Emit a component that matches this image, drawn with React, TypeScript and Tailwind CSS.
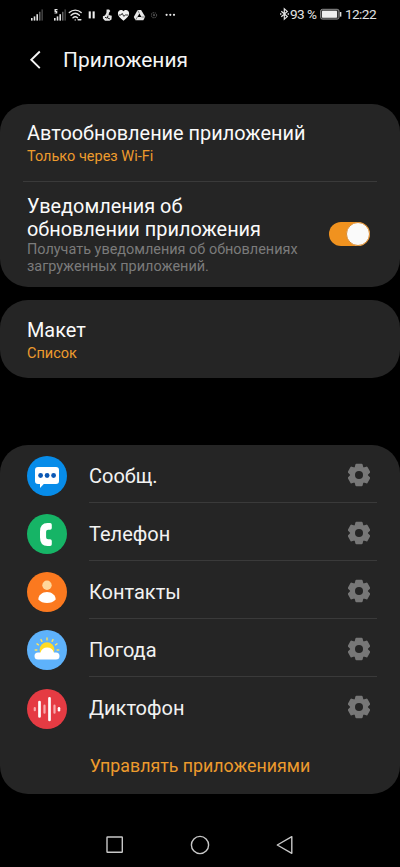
import type { ReactNode } from "react";

function Signal({ busy = false }: { busy?: boolean }) {
  return (
    <svg width="14" height="14" viewBox="0 0 14 14" fill="#e4e4e4">
      <rect x="1" y="10" width="1.6" height="2.6" />
      <rect x="3.7" y="8.4" width="1.6" height="4.2" />
      <rect x="6.4" y="6.2" width="1.6" height="6.4" />
      <rect x="9" y="3.8" width="1.5" height="8.8" fill="#6a6a6a" />
      <rect x="11.5" y="1.4" width="1.3" height="11.2" fill="#4c4c4c" />
      {busy && <path d="M1.500 1h3v1.200H2.900v.8h1.400v2.600H1.500V4.500h1.400V4H1.500z" />}
    </svg>
  );
}

function Gear() {
  return (
    <svg className="mt-[17.500px] mr-[7px]" width="22" height="24" viewBox="-11 -12 22 24">
      <g fill="#777777">
        {[0, 60, 120, 180, 240, 300].map((angle) => (
          <path key={angle} transform={`rotate(${angle})`} d="M-4.600-6.500l1-4q.2-.8 1-.8h5.200q.8 0 1 .8l1 4z" />
        ))}
        <circle r="8.700" />
      </g>
      <circle r="4" fill="#252525" />
    </svg>
  );
}

function StatusIcons() {
  return (
    <div className="flex items-center">
      <Signal />
      <div className="ml-[9px] flex"><Signal busy /></div>
      <svg className="ml-[1px]" width="15" height="14" viewBox="0 0 15 14" fill="none" stroke="#e4e4e4" strokeWidth="1.4" strokeLinecap="round">
        <path d="M1.300 4.600C4.800 1.300 9.700 1.300 13.200 4.600" />
        <path d="M3.100 7.200c2.500-2.300 5.800-2.300 8.300 0" />
        <path d="M5 9.700c1.400-1.200 3.100-1.200 4.500 0" />
        <path d="M7.200 11.900h.1" />
        <path d="M10.200 11.700h2.600" strokeWidth="1.500" />
      </svg>
      <svg className="ml-[5px]" width="8" height="14" viewBox="0 0 8 14" fill="#eee">
        <rect x="0.700" y="3.400" width="2.100" height="7" />
        <rect x="4.600" y="3.400" width="2.100" height="7" />
      </svg>
      <svg className="ml-[6px]" width="11" height="14" viewBox="0 0 11 14">
        <path fill="#e4e4e4" d="M4.600 1.400h2.500l1.200 1.700-1.300 1.600-.4 2.200 3.200.9-.3 3.600-2 1.300H3L.9 10.400V8.300l2.100-.8 1.400-2.400z" />
        <path fill="none" stroke="#000" strokeWidth="0.900" d="M3 9.300l2 .8M6 7.600l-.6 2.300 2.500 1" />
      </svg>
      <svg className="ml-[4px]" width="13" height="14" viewBox="0 0 13 14">
        <path fill="#f0f0f0" d="M6.500 12.800C3 10 .9 8 .9 5.300.9 3.300 2.300 2 4 2c1 0 1.900.5 2.500 1.300C7.100 2.500 8 2 9 2c1.700 0 3.100 1.300 3.100 3.300 0 2.700-2.100 4.700-5.600 7.500z" />
        <path fill="none" stroke="#000" strokeWidth="0.800" d="M2 7h2l1.200-1.600 1.600 3L8.300 7H11" />
      </svg>
      <svg className="ml-[3px]" width="13" height="14" viewBox="0 0 13 14">
        <path fill="#e8e8e8" d="M4.600 2h3.500l4.100 6.800-1.900 3.500H2.500L.8 9z" />
        <path fill="#000" d="M6.400 5.500l2 3.500h-4z" />
        <path fill="none" stroke="#222" strokeWidth="0.500" d="M6.400 5.500L4.600 2.200M8.400 9h4M4.400 9l-2 3.300" />
      </svg>
      <svg className="ml-[4px]" width="8" height="14" viewBox="0 0 8 14" fill="none" stroke="#484848" strokeWidth="1.100">
        <circle cx="4" cy="7.200" r="2.600" strokeDasharray="1.400 .7" />
        <circle cx="4" cy="7.200" r=".6" />
      </svg>
      <svg className="ml-[7px]" width="11" height="14" viewBox="0 0 11 14" fill="#e8e8e8">
        <circle cx="1.600" cy="6.800" r="1.100" />
        <circle cx="5.300" cy="6.800" r="1.100" />
        <circle cx="9" cy="6.800" r="1.100" />
      </svg>
    </div>
  );
}

function StatusBar() {
  return (
    <header className="flex h-[29px] items-center justify-between pr-6 pl-[30px] text-[13.600px] text-[#e2e2e2]">
      <StatusIcons />
      <div className="flex items-center whitespace-nowrap">
        <svg width="11" height="14" viewBox="0 0 11 14" fill="none" stroke="#e4e4e4" strokeWidth="1.200">
          <path d="M2.300 4.200l6 5.400-3 2.600V1.800l3 2.600-6 5.400" />
          <path d="M1 7h1.400M8.600 7H10" strokeWidth="1.400" />
        </svg>
        <span className="w-[27px] tracking-[-0.500px]">93 %</span>
        <svg className="ml-[3px]" width="22" height="14" viewBox="0 0 22 14">
          <rect x=".6" y="2.300" width="18.400" height="9.800" rx="1.800" fill="#333" stroke="#8b8b8b" />
          <rect x="2" y="3.700" width="15" height="7" rx=".6" fill="#eee" />
          <path d="M20.600 5v4.600" stroke="#ddd" strokeWidth="1.500" />
        </svg>
        <span className="ml-[3px] tracking-[-0.550px]">12:22</span>
      </div>
    </header>
  );
}

function Setting({ title, value }: { title: string; value: string }) {
  return (
    <div className="px-[27px]">
      <h2 className="text-[19.900px] leading-[23.400px] whitespace-nowrap text-[#fafafa]">{title}</h2>
      <p className="mt-[3px] text-[14.500px] leading-[17px] whitespace-nowrap text-[#ed9b2d]">{value}</p>
    </div>
  );
}

function Toggle() {
  return (
    <div className="flex h-6 w-[41px] items-center justify-end rounded-full bg-[#f0921f]">
      <div className="size-6 rounded-full border border-[#d98d35] bg-[#fafafa]" />
    </div>
  );
}

const apps: { name: string; color: string; glyph: ReactNode }[] = [
  {
    name: "Сообщ.",
    color: "#078ce9",
    glyph: (
      <>
        <path fill="#fff" d="M11 11h18a3 3 0 0 1 3 3v11a3 3 0 0 1-3 3H16.800L13 32v-4h-2a3 3 0 0 1-3-3V14a3 3 0 0 1 3-3z" />
        <g fill="#0b58b5">
          <circle cx="13.600" cy="19.500" r="2.400" />
          <circle cx="20.100" cy="19.500" r="2.400" />
          <circle cx="26.600" cy="19.500" r="2.400" />
        </g>
      </>
    ),
  },
  {
    name: "Телефон",
    color: "#16b466",
    glyph: <path fill="#fff" d="M20.500 9h2.600q1.700 0 1.700 1.700v3.300q0 1.700-1.700 1.700h-2q-2 0-2 2v5.600q0 2 2 2h2q1.700 0 1.700 1.700v3.300q0 1.700-1.700 1.700h-2.600q-7.500 0-7.500-8.500v-6q0-8.500 7.500-8.500z" />,
  },
  {
    name: "Контакты",
    color: "#fb791f",
    glyph: (
      <>
        <circle cx="20" cy="13.200" r="4.700" fill="#ffd79a" />
        <path fill="#fff" d="M11.300 27.500c0-4.400 3.900-7.600 8.700-7.600s8.700 3.200 8.700 7.600c-2.200 2.300-5.100 3.600-8.700 3.600s-6.500-1.300-8.700-3.600z" />
      </>
    ),
  },
  {
    name: "Погода",
    color: "#5eb2fb",
    glyph: (
      <>
        <circle cx="20" cy="19.700" r="7.400" fill="#ffdb25" />
        <path fill="none" stroke="#ffe35c" strokeWidth="1.400" strokeLinecap="round" d="M20 8v1.900M14 9.600l.9 1.700M26 9.600l-.9 1.700M10 13.800l1.500 1M30 13.800l-1.500 1M8.200 20h1.700M31.800 20h-1.700" />
        <path fill="#fff" d="M11 22.500h2.500c1-3 3.400-4.900 6.700-4.900s5.700 1.900 6.700 4.900H29a3.500 3.500 0 0 1 0 7H11a3.500 3.500 0 0 1 0-7z" />
      </>
    ),
  },
  {
    name: "Диктофон",
    color: "#e53b43",
    glyph: (
      <g fill="none" strokeLinecap="round" strokeWidth="2.700">
        <path stroke="#fff" d="M12.500 13v14.500M22.500 9.300v21.700" />
        <path stroke="#f8a9ac" strokeWidth="2.200" d="M17.500 16.700v7M27.500 16.700v7M7.800 19v2.200" />
        <path stroke="#fff" strokeWidth="2.500" d="M32 19.200v2" />
      </g>
    ),
  },
];

export default function App() {
  return (
    <div className="flex h-[867px] w-[400px] flex-col overflow-hidden bg-black font-['Roboto',sans-serif]">
      <StatusBar />
      <div className="flex h-[75px] items-start pt-[19px] pl-[29px]">
        <svg className="mt-[2px]" width="14" height="20" viewBox="0 0 14 20" fill="none" stroke="#f5f5f5" strokeWidth="1.900">
          <path d="M10.800 1.500L2.300 9.800l8.500 8.300" />
        </svg>
        <h1 className="ml-5 text-[20.900px] leading-6 text-[#f5f5f5]">Приложения</h1>
      </div>

      <main className="flex flex-col">
        <section className="h-[183px] rounded-[28px] bg-[#252525] pt-[18px]">
          <Setting title="Автообновление приложений" value="Только через Wi-Fi" />
          <div className="mx-[23px] mt-[15.600px] h-px bg-[#3a3a3a]" />
          <div className="flex items-start justify-between pt-[13px] pr-[30px] pl-[27px]">
            <div className="whitespace-nowrap">
              <h2 className="text-[19.900px] leading-[23.400px] text-[#fafafa]">Уведомления об<br />обновлении приложения</h2>
              <p className="-mt-px text-[14.450px] leading-[17px] text-[#7b7b7b]">Получать уведомления об обновлениях<br />загруженных приложений.</p>
            </div>
            <div className="mt-[27px]"><Toggle /></div>
          </div>
        </section>

        <section className="mt-[13px] h-[77.500px] rounded-[28px] bg-[#252525] pt-[18.500px]">
          <Setting title="Макет" value="Список" />
        </section>

        <section className="mt-[67.500px] h-[349px] rounded-[28px] bg-[#252525]">
          <ul>
            {apps.map((app, i) => (
              <li key={app.name} className="flex h-[58.100px] pl-[27px]">
                <svg className="mt-[11.200px] shrink-0" width="40" height="40" viewBox="0 0 40 40">
                  <circle cx="20" cy="20" r="20" fill={app.color} />
                  {app.glyph}
                </svg>
                <div className={`ml-[22px] flex w-[288px] items-start justify-between border-b ${i < apps.length - 1 ? "border-[#3a3a3a]" : "border-transparent"}`}>
                  <span className="pt-[19.700px] text-[20px] leading-[23.400px] text-[#f2f2f2]">{app.name}</span>
                  <Gear />
                </div>
              </li>
            ))}
          </ul>
          <p className="mt-5 text-center text-[17.800px] leading-[22px] text-[#ed9b2d]">Управлять приложениями</p>
        </section>
      </main>

      <nav className="mt-[38px] flex justify-center">
        <svg width="190" height="24" viewBox="0 0 190 24" fill="none" stroke="#c8c8c8" strokeWidth="1.400" strokeLinejoin="round">
          <rect x="2" y="5" width="15.300" height="15.300" rx=".5" />
          <circle cx="95" cy="13" r="8.600" />
          <path d="M172.300 13l14.500-8.300v16.600z" />
        </svg>
      </nav>
    </div>
  );
}
